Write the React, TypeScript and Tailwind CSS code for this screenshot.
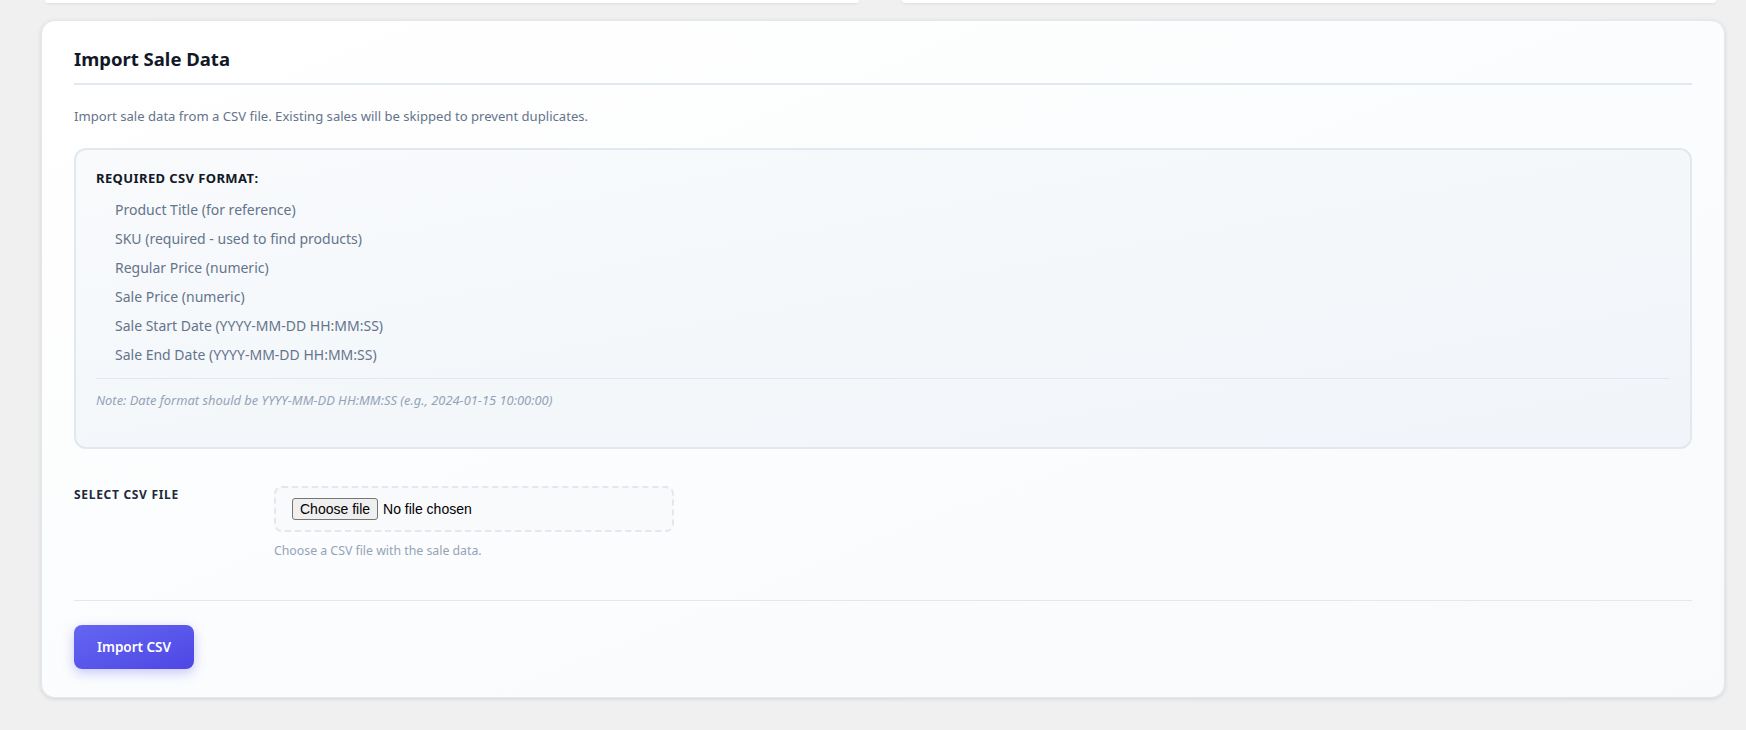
import React from "react";

const items = [
  "Product Title (for reference)",
  "SKU (required - used to find products)",
  "Regular Price (numeric)",
  "Sale Price (numeric)",
  "Sale Start Date (YYYY-MM-DD HH:MM:SS)",
  "Sale End Date (YYYY-MM-DD HH:MM:SS)",
];

export default function App() {
  return (
    <div
      className="min-h-[730px] w-full bg-[#f0f0f0] pl-[41px] pr-[21px]"
      style={{ fontFamily: '"Noto Sans", "Open Sans", sans-serif' }}
    >
      <div className="flex h-[3px] gap-[43px] pl-[4px] pr-[9px]">
        <div className="flex-1 rounded-b-[6px] bg-white shadow-[0_1px_3px_rgba(0,0,0,0.08)]" />
        <div className="flex-1 rounded-b-[6px] bg-white shadow-[0_1px_3px_rgba(0,0,0,0.08)]" />
      </div>
      <div className="mt-[17px] rounded-[14px] border border-[#e2e8f0] bg-gradient-to-br from-white to-[#f8fafc] px-[32px] pb-[28px] pt-[24px] shadow-[0_1px_4px_rgba(0,0,0,0.12)]">
        <h2 className="border-b-2 border-[#e2e8f0] pb-[10px] text-[18.5px] font-bold leading-[28px] text-[#111827]">
          Import Sale Data
        </h2>
        <p className="mt-[21px] text-[13.1px] leading-[20px] text-[#64748b]">
          Import sale data from a CSV file. Existing sales will be skipped to prevent duplicates.
        </p>
        <div className="mt-[22px] rounded-[12px] border-2 border-[#e2e8f0] bg-gradient-to-br from-[#f8fafc] to-[#f1f5f9] px-[20px] pb-[39px] pt-[20px]">
          <div className="mb-[9px] text-[13px] font-bold uppercase leading-[16px] tracking-[0.4px] text-[#111827]">
            Required CSV Format:
          </div>
          <ul className="pl-[19px]">
            {items.map((t) => (
              <li key={t} className="text-[14px] leading-[29px] text-[#64748b]">
                {t}
              </li>
            ))}
          </ul>
          <div className="mt-[9px] border-t border-[#e2e8f0] pt-[13px] text-[12.9px] italic leading-[16px] text-[#94a3b8]">
            Note: Date format should be YYYY-MM-DD HH:MM:SS (e.g., 2024-01-15 10:00:00)
          </div>
        </div>
        <div className="mt-[37px] flex items-start">
          <label className="w-[200px] shrink-0 pt-[1px] text-[12px] font-bold uppercase leading-[16px] tracking-[0.7px] text-[#1e293b]">
            Select CSV File
          </label>
          <div>
            <label className="flex h-[46px] w-[400px] cursor-pointer items-center rounded-[8px] border-2 border-dashed border-[#e2e8f0] bg-[#f8fafc] px-[16px]">
              <input type="file" accept=".csv" className="hidden" />
              <span
                className="flex h-[22px] items-center rounded-[3px] border border-[#767676] bg-[#efefef] px-[7px] text-[14px] leading-[16px] text-black"
                style={{ fontFamily: '"Liberation Sans", Arial, sans-serif' }}
              >
                Choose file
              </span>
              <span
                className="ml-[5px] text-[14px] leading-[16px] text-black"
                style={{ fontFamily: '"Liberation Sans", Arial, sans-serif' }}
              >
                No file chosen
              </span>
            </label>
            <p className="mt-[10px] text-[12.3px] leading-[18px] text-[#94a3b8]">
              Choose a CSV file with the sale data.
            </p>
          </div>
        </div>
        <div className="mt-[40px] border-t border-[#e2e8f0] pt-[24px]">
          <button className="h-[44px] w-[120px] rounded-[8px] bg-gradient-to-br from-[#6366f1] to-[#4f46e5] text-[13.5px] font-semibold text-white shadow-[0_4px_12px_rgba(99,102,241,0.35)]">
            Import CSV
          </button>
        </div>
      </div>
    </div>
  );
}
